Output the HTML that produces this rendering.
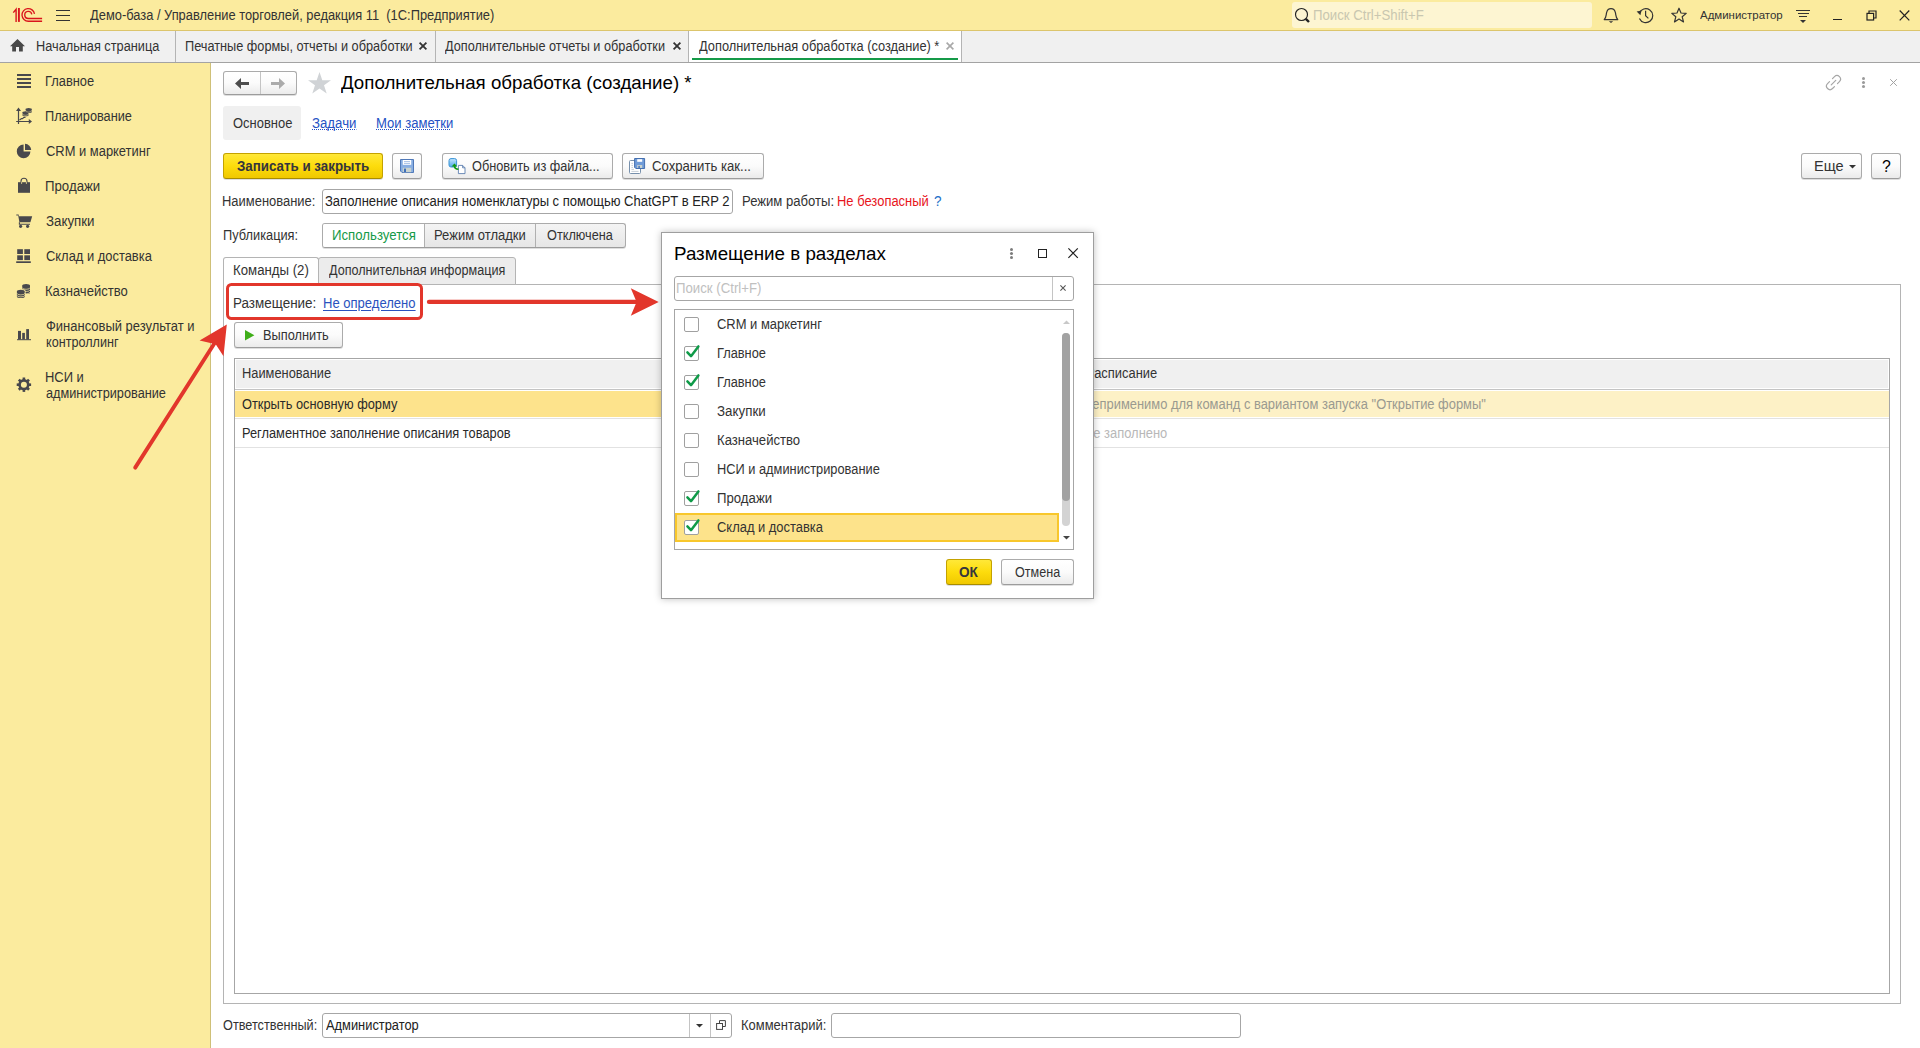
<!DOCTYPE html>
<html lang="ru">
<head>
<meta charset="utf-8">
<title>1C</title>
<style>
*{box-sizing:border-box;margin:0;padding:0}
html,body{width:1920px;height:1048px;overflow:hidden;background:#fff}
body{font-family:"Liberation Sans",sans-serif;font-size:14px;color:#333;position:relative}
.abs{position:absolute}
svg{position:absolute;overflow:visible}
.t{position:absolute;white-space:nowrap;line-height:16px;transform-origin:0 0}
.tabsep{position:absolute;top:31px;width:1px;height:31px;background:#b4b4b4}
.btn{position:absolute;border:1px solid #ababab;border-bottom-color:#9c9c9c;border-radius:3px;background:linear-gradient(#ffffff 0%,#fbfbfb 50%,#ebebeb 100%);box-shadow:0 1px 0 rgba(0,0,0,.13)}
.ybtn{background:linear-gradient(#ffe838 0%,#fddc0c 50%,#f0c800 100%);border-color:#c4a200;border-bottom-color:#a88c00}
.inp{position:absolute;border:1px solid #a6a6a6;border-radius:3px;background:#fff}
.lnk{color:#2a52be;text-decoration:underline;text-underline-offset:1.5px}
.lnkd{color:#2452c4;background:repeating-linear-gradient(90deg,#2452c4 0 1px,transparent 1px 2.1px) 0 14px/100% 1px no-repeat}
.cb{position:absolute;width:15px;height:15px;border:1px solid #a0a0a0;border-radius:2px;background:#fff}
</style>
</head>
<body>
<!-- TITLE BAR -->
<div class="abs" style="left:0;top:0;width:1920px;height:30px;background:#fbeb9e"></div>
<div class="abs" style="left:0;top:30px;width:1920px;height:1px;background:#dcc56c"></div>
<!-- logo -->
<svg style="left:12px;top:7px" width="31" height="16" viewBox="0 0 31 16"><g fill="none" stroke="#d9141c"><path d="M1.3 5.6 L4.1 2.2 V14.9" stroke-width="1.4"/><path d="M6.9 1 V14.9" stroke-width="1.9"/><path d="M30.1 14.2 H16.3 A6.3 6.3 0 1 1 22.5 6.8" stroke-width="1.35"/><path d="M30.1 11.45 H16.3 A3.55 3.55 0 1 1 19.8 7.3" stroke-width="1.35"/></g></svg>
<!-- hamburger -->
<div class="abs" style="left:56px;top:10px;width:14px;height:1.4px;background:#333"></div>
<div class="abs" style="left:56px;top:15px;width:14px;height:1.4px;background:#333"></div>
<div class="abs" style="left:56px;top:20px;width:14px;height:1.4px;background:#333"></div>
<!-- search -->
<div class="abs" style="left:1292px;top:2px;width:300px;height:26px;background:#fdf5d2;border-radius:3px"></div>
<svg style="left:1294px;top:7px" width="17" height="17" viewBox="0 0 17 17"><circle cx="7.5" cy="7.5" r="6" fill="none" stroke="#222" stroke-width="1.15"/><path d="M11.8 11.8 L15 15" stroke="#222" stroke-width="2.4"/></svg>
<!-- bell -->
<svg style="left:1603px;top:7px" width="16" height="17" viewBox="0 0 16 17"><path d="M1.2 12.6 C3.4 10.5 3 8 3.6 5.6 C4.2 3 6 1.7 8 1.7 C10 1.7 11.8 3 12.4 5.6 C13 8 12.6 10.5 14.8 12.6 Z" fill="none" stroke="#333" stroke-width="1.2" stroke-linejoin="round"/><path d="M5.8 14.3 H10.2 L8 16 Z" fill="#333"/></svg>
<!-- history -->
<svg style="left:1636px;top:7px" width="18" height="17" viewBox="0 0 18 17"><path d="M3.2 6.2 A7 7 0 1 1 3.4 11.6" fill="none" stroke="#333" stroke-width="1.2"/><path d="M0.6 4.6 L5.6 3.6 L4.4 8.2 Z" fill="#333"/><path d="M9.6 3.8 V8.8 L12.4 11.4" fill="none" stroke="#333" stroke-width="1.2"/></svg>
<!-- star -->
<svg style="left:1671px;top:7px" width="16" height="16" viewBox="0 0 16 16"><path d="M8 1.2 L10 6 L15.2 6.4 L11.2 9.8 L12.5 14.9 L8 12.1 L3.5 14.9 L4.8 9.8 L0.8 6.4 L6 6 Z" fill="none" stroke="#333" stroke-width="1.2" stroke-linejoin="round"/></svg>
<!-- menu -->
<div class="abs" style="left:1796px;top:10px;width:14px;height:1.2px;background:#333"></div>
<div class="abs" style="left:1797.5px;top:13px;width:11px;height:1.2px;background:#333"></div>
<div class="abs" style="left:1799px;top:16px;width:8px;height:1.2px;background:#333"></div>
<svg style="left:1800px;top:20px" width="6" height="3" viewBox="0 0 6 3"><path d="M0 0 H6 L3 3 Z" fill="#333"/></svg>
<!-- win controls -->
<div class="abs" style="left:1833px;top:19px;width:9px;height:1.3px;background:#222"></div>
<svg style="left:1866px;top:10px" width="11" height="11" viewBox="0 0 11 11"><path d="M3 3 V1 H10 V8 H8" fill="none" stroke="#222" stroke-width="1.2"/><rect x="1" y="3.4" width="6.6" height="6.6" fill="none" stroke="#222" stroke-width="1.2"/></svg>
<svg style="left:1899px;top:10px" width="11" height="11" viewBox="0 0 11 11"><path d="M0.7 0.5 L10.3 10.3 M10.3 0.5 L0.7 10.3" stroke="#222" stroke-width="1.2"/></svg>

<!-- TAB BAR -->
<div class="abs" style="left:0;top:31px;width:1920px;height:31px;background:#f0f0f0"></div>
<div class="abs" style="left:0;top:62px;width:1920px;height:1px;background:#a3a3a3"></div>
<div class="abs" style="left:689px;top:31px;width:272px;height:31px;background:#fff"></div>
<div class="abs" style="left:692px;top:58px;width:266px;height:2px;background:#159a48"></div>
<div class="tabsep" style="left:175px"></div>
<div class="tabsep" style="left:435px"></div>
<div class="tabsep" style="left:688px"></div>
<div class="tabsep" style="left:961px"></div>
<svg style="left:10px;top:39px" width="15" height="13" viewBox="0 0 15 13"><path d="M7.5 0 L15 7.2 H12.8 V12.4 H9 V8 H6 V12.4 H2.2 V7.2 H0 Z" fill="#484848"/></svg>
<svg style="left:419px;top:42px" width="8" height="8" viewBox="0 0 8 8"><path d="M0.6 0.6 L7.4 7.4 M7.4 0.6 L0.6 7.4" stroke="#333" stroke-width="1.8"/></svg>
<svg style="left:672.5px;top:42px" width="8" height="8" viewBox="0 0 8 8"><path d="M0.6 0.6 L7.4 7.4 M7.4 0.6 L0.6 7.4" stroke="#333" stroke-width="1.8"/></svg>
<svg style="left:945.5px;top:42px" width="8" height="8" viewBox="0 0 8 8"><path d="M0.6 0.6 L7.4 7.4 M7.4 0.6 L0.6 7.4" stroke="#a8a8a8" stroke-width="1.6"/></svg>

<!-- SIDEBAR -->
<div class="abs" style="left:0;top:63px;width:210px;height:985px;background:#fbeb9e"></div>
<div class="abs" style="left:210px;top:63px;width:1px;height:985px;background:#cfc078"></div>
<!-- glavnoe -->
<div class="abs" style="left:17px;top:74px;width:14px;height:2px;background:#48484c;box-shadow:0 4px 0 #48484c,0 8px 0 #48484c,0 12px 0 #48484c"></div>
<!-- planning -->
<svg style="left:15px;top:107px" width="18" height="18" viewBox="0 0 18 18"><g fill="none" stroke="#48484c" stroke-width="1.2"><path d="M3.5 17 V2.2 M1.2 14.5 H15"/><path d="M4.5 13 L6.5 11.5 L7.5 11.6 L9 10.3 H10.5"/></g><path d="M3.5 0.6 L6 4 H1 Z M17 14.5 L13.8 12 V17 Z" fill="#48484c"/><g fill="#48484c"><ellipse cx="13.7" cy="2.6" rx="3.2" ry="1.5"/><ellipse cx="13.7" cy="4.6" rx="3.2" ry="1.5"/><ellipse cx="10.5" cy="5.8" rx="3.2" ry="1.5"/><ellipse cx="10.5" cy="7.8" rx="3.2" ry="1.5"/></g><g fill="none" stroke="#fbeb9e" stroke-width="0.5"><path d="M10.5 3.6 A3.2 1.5 0 0 0 16.9 3.6"/><path d="M7.3 6.8 A3.2 1.5 0 0 0 13.7 6.8"/></g></svg>
<!-- crm pie -->
<svg style="left:16px;top:143px" width="16" height="16" viewBox="0 0 16 16"><path d="M7.6 1.6 A6.8 6.8 0 1 0 14.4 8.4 H7.6 Z" fill="#48484c"/><path d="M9 0.8 A6.4 6.4 0 0 1 15.2 7 H9 Z" fill="#48484c"/></svg>
<!-- bag -->
<svg style="left:17px;top:177px" width="14" height="17" viewBox="0 0 14 17"><rect x="1" y="5.2" width="12" height="10.6" fill="#48484c"/><path d="M4 7 V4.2 A3 3 0 0 1 10 4.2 V7" fill="none" stroke="#48484c" stroke-width="1.1"/><path d="M4.6 5.2 V6.8 M9.4 5.2 V6.8" stroke="#fbeb9e" stroke-width="0.9"/></svg>
<!-- cart -->
<svg style="left:16px;top:213px" width="17" height="16" viewBox="0 0 17 16"><path d="M0.3 1.4 H2.6 L3 3.2 H16.2 L14.4 9.2 H3.4 L2.2 2.4 H0.3 Z" fill="#48484c"/><path d="M3.4 9.2 V11.3 H14" fill="none" stroke="#48484c" stroke-width="1.1"/><circle cx="4.6" cy="13.3" r="1.6" fill="#48484c"/><circle cx="11.6" cy="13.3" r="1.6" fill="#48484c"/></svg>
<!-- warehouse -->
<svg style="left:16px;top:249px" width="15" height="15" viewBox="0 0 15 15"><g fill="#48484c"><rect x="1.2" y="0.2" width="5.7" height="4.8"/><rect x="8.3" y="0.2" width="5.7" height="4.8"/><rect x="1.2" y="6.3" width="5.7" height="4.8"/><rect x="8.3" y="6.3" width="5.7" height="4.8"/><rect x="0.2" y="12.3" width="14.6" height="1.7"/></g></svg>
<!-- treasury coins -->
<svg style="left:16px;top:283px" width="16" height="16" viewBox="0 0 16 16"><g fill="#48484c"><path d="M6.2 2.6 A3.9 1.7 0 0 1 14 2.6 V9.4 A3.9 1.7 0 0 1 6.2 9.4 Z"/></g><g fill="none" stroke="#fbeb9e" stroke-width="0.7"><path d="M6.2 4.6 A3.9 1.7 0 0 0 14 4.6"/><path d="M6.2 6.8 A3.9 1.7 0 0 0 14 6.8"/><path d="M6.2 9 A3.9 1.7 0 0 0 14 9"/></g><path d="M0.4 8.2 A4.4 2.2 0 0 1 9.6 8.2 V13.4 A4.4 2.2 0 0 1 0.4 13.4 Z" fill="#fbeb9e"/><path d="M0.9 8.4 A3.9 1.7 0 0 1 8.7 8.4 V13.4 A3.9 1.7 0 0 1 0.9 13.4 Z" fill="#48484c"/><g fill="none" stroke="#fbeb9e" stroke-width="0.7"><path d="M0.9 10.2 A3.9 1.7 0 0 0 8.7 10.2"/><path d="M0.9 12.2 A3.9 1.7 0 0 0 8.7 12.2"/></g></svg>
<!-- finance -->
<svg style="left:17px;top:329px" width="14" height="12" viewBox="0 0 14 12"><g fill="#48484c"><rect x="1" y="1.9" width="3" height="8.6"/><rect x="5.2" y="3.9" width="2.7" height="6.6"/><rect x="9.2" y="0.1" width="2.8" height="10.4"/><rect x="0" y="10.2" width="14" height="1"/></g></svg>
<!-- gear -->
<svg style="left:16px;top:377px" width="16" height="16" viewBox="0 0 16 16"><g transform="translate(7.9 7.7)"><circle r="4.3" fill="none" stroke="#48484c" stroke-width="2.6"/><g fill="#48484c"><rect x="-1.3" y="-7.2" width="2.6" height="3"/><rect x="-1.3" y="4.2" width="2.6" height="3"/><rect x="-7.2" y="-1.3" width="3" height="2.6"/><rect x="4.2" y="-1.3" width="3" height="2.6"/><g transform="rotate(45)"><rect x="-1.3" y="-7.2" width="2.6" height="3"/><rect x="-1.3" y="4.2" width="2.6" height="3"/><rect x="-7.2" y="-1.3" width="3" height="2.6"/><rect x="4.2" y="-1.3" width="3" height="2.6"/></g></g></g></svg>

<!-- nav -->
<div class="btn" style="left:223px;top:71px;width:74px;height:24px"></div>
<div class="abs" style="left:260px;top:72px;width:1px;height:22px;background:#c4c4c4"></div>
<svg style="left:235px;top:78px" width="14" height="11" viewBox="0 0 14 11"><path d="M0 5.5 L6 0 V4.1 H14 V6.9 H6 V11 Z" fill="#4d4d4d"/></svg>
<svg style="left:271px;top:78px" width="14" height="11" viewBox="0 0 14 11"><path d="M14 5.5 L8 0 V4.1 H0 V6.9 H8 V11 Z" fill="#ababab"/></svg>
<svg style="left:308px;top:72px" width="23" height="22" viewBox="0 0 23 22"><path d="M11.5 0 L14.3 8.2 H23 L16 13.3 L18.7 21.6 L11.5 16.5 L4.3 21.6 L7 13.3 L0 8.2 H8.7 Z" fill="#d0d3d6"/></svg>
<!-- right header icons -->
<svg style="left:1825px;top:74px" width="18" height="18" viewBox="0 0 18 18"><g fill="none" stroke="#a6a6a6" stroke-width="1.2" stroke-linecap="round" transform="translate(8.5 8.6) rotate(-45)"><path d="M2.1 -3.5 H4.9 A3.5 3.5 0 0 1 4.9 3.5 H2.1"/><path d="M-2.1 3.5 H-4.9 A3.5 3.5 0 0 1 -4.9 -3.5 H-2.1"/><path d="M-3.2 0 H3.2"/></g></svg>
<div class="abs" style="left:1862px;top:77px;width:3px;height:3px;border-radius:50%;background:#9a9a9a;box-shadow:0 4px 0 #9a9a9a,0 8px 0 #9a9a9a"></div>
<svg style="left:1890px;top:79px" width="7" height="7" viewBox="0 0 7 7"><path d="M0.2 0.2 L6.8 6.8 M6.8 0.2 L0.2 6.8" stroke="#a2a2a2" stroke-width="1"/></svg>
<!-- subtabs -->
<div class="abs" style="left:223px;top:106px;width:78px;height:34px;background:#f0f0f0;border-radius:3px"></div>
<!-- command bar -->
<div class="btn ybtn" style="left:223px;top:153px;width:160px;height:26px"></div>
<div class="btn" style="left:392px;top:153px;width:30px;height:26px"></div>
<svg style="left:400px;top:159px" width="14" height="14" viewBox="0 0 14 14"><path d="M0.5 0.5 H13.5 V13.5 H2 L0.5 12 Z" fill="#88aee2" stroke="#5079b8"/><rect x="2.8" y="1" width="8.4" height="4.8" fill="#fff"/><path d="M4 2.6 H10 M4 4.4 H10" stroke="#8fb0de" stroke-width="0.8"/><rect x="2.8" y="8.8" width="8.4" height="4.4" fill="#c9d2ce"/><rect x="4" y="9.6" width="2" height="3.4" fill="#3f6fb8"/></svg>
<div class="btn" style="left:442px;top:153px;width:171px;height:26px"></div>
<svg style="left:448px;top:158px" width="18" height="17" viewBox="0 0 18 17"><defs><linearGradient id="gb" x1="0" y1="0" x2="0" y2="1"><stop offset="0" stop-color="#c4e6ff"/><stop offset="1" stop-color="#4ea6e6"/></linearGradient></defs><rect x="1" y="0.6" width="7.6" height="8.4" rx="2" fill="url(#gb)" stroke="#3b94d6"/><path d="M10.4 7.4 H14.6 L17 9.8 V15.6 H10.4 Z" fill="#fff" stroke="#5c7fb0" stroke-width="0.9"/><path d="M14.6 7.4 V9.8 H17" fill="none" stroke="#5c7fb0" stroke-width="0.9"/><path d="M10.4 11.2 C7.8 11.2 6.6 10 6.4 8.2" fill="none" stroke="#119911" stroke-width="1.6"/><path d="M3.6 8.4 L6.4 5.4 L9.2 8.4 Z" fill="#119911"/></svg>
<div class="btn" style="left:622px;top:153px;width:142px;height:26px"></div>
<svg style="left:629px;top:157px" width="17" height="18" viewBox="0 0 17 18"><rect x="0.5" y="3.5" width="11" height="13" rx="1" fill="#fff" stroke="#7790ac"/><path d="M2.4 6.4 H4 M2.4 8.4 H4 M2.4 10.4 H4 M2.4 12.4 H5 M2.4 14.4 H9.6" stroke="#b8c2cc" stroke-width="0.8"/><path d="M5.6 1.5 H15.6 V11.5 H6.8 L5.6 10.3 Z" fill="#6f9bd8" stroke="#4570b0"/><rect x="8.2" y="2.2" width="5" height="2.6" fill="#fff"/><rect x="8.2" y="8" width="5" height="3" fill="#c9d2ce"/><rect x="9.4" y="8.8" width="1.4" height="2.2" fill="#3f6fb8"/></svg>
<div class="btn" style="left:1801px;top:153px;width:61px;height:26px"></div>
<svg style="left:1848.5px;top:165px" width="7" height="4" viewBox="0 0 7 4"><path d="M0 0 H7 L3.5 3.6 Z" fill="#333"/></svg>
<div class="btn" style="left:1871px;top:153px;width:30px;height:26px"></div>
<!-- name row -->
<div class="inp" style="left:322px;top:189px;width:411px;height:25px"></div>
<!-- publication -->
<div class="btn" style="left:322px;top:223px;width:304px;height:25px;background:linear-gradient(#f4f4f4,#e6e6e6)"></div>
<div class="abs" style="left:323px;top:224px;width:101px;height:23px;background:#fff;border-radius:2px 0 0 2px"></div>
<div class="abs" style="left:424px;top:224px;width:1px;height:23px;background:#b0b0b0"></div>
<div class="abs" style="left:535px;top:224px;width:1px;height:23px;background:#b0b0b0"></div>
<!-- page tabs -->
<div class="abs" style="left:223px;top:284px;width:1678px;height:720px;border:1px solid #b4b4b4"></div>
<div class="abs" style="left:318px;top:257px;width:198px;height:28px;background:#ececec;border:1px solid #b4b4b4;border-radius:3px 3px 0 0"></div>
<div class="abs" style="left:223px;top:257px;width:96px;height:28px;background:#fff;border:1px solid #b4b4b4;border-bottom:none;border-radius:3px 3px 0 0"></div>
<div class="btn" style="left:234px;top:322px;width:109px;height:26px"></div>
<svg style="left:245px;top:330px" width="10" height="11" viewBox="0 0 10 11"><path d="M0 0 L9.4 5.3 L0 10.6 Z" fill="#3fae19"/></svg>
<!-- table -->
<div class="abs" style="left:234px;top:358px;width:1656px;height:636px;border:1px solid #a6a6a6"></div>
<div class="abs" style="left:236px;top:360px;width:1652px;height:28px;background:#f0f0f0"></div>
<div class="abs" style="left:235px;top:389px;width:1654px;height:1px;background:#c4c4c4"></div>
<div class="abs" style="left:235px;top:391px;width:850px;height:26px;background:#fde38c"></div>
<div class="abs" style="left:1085px;top:391px;width:804px;height:26px;background:#fdf1c6"></div>
<div class="abs" style="left:235px;top:418px;width:1654px;height:1px;background:#e2e2e2"></div>
<div class="abs" style="left:235px;top:447px;width:1654px;height:1px;background:#e2e2e2"></div>
<!-- footer -->
<div class="inp" style="left:322px;top:1013px;width:410px;height:25px"></div>
<div class="abs" style="left:689px;top:1014px;width:1px;height:23px;background:#c4c4c4"></div>
<div class="abs" style="left:710px;top:1014px;width:1px;height:23px;background:#c4c4c4"></div>
<svg style="left:696px;top:1024px" width="7" height="4" viewBox="0 0 7 4"><path d="M0 0 H7 L3.5 3.6 Z" fill="#333"/></svg>
<svg style="left:716px;top:1020px" width="10" height="10" viewBox="0 0 10 10"><path d="M3.5 3.5 V0.6 H9.4 V6.5 H6.5" fill="none" stroke="#444" stroke-width="1"/><rect x="0.6" y="3.5" width="5.9" height="5.9" fill="none" stroke="#444" stroke-width="1"/></svg>
<div class="inp" style="left:831px;top:1013px;width:410px;height:25px"></div>

<div class="t" style="left:89.54px;top:7px;transform:scaleX(0.9194);">Демо-база / Управление торговлей, редакция 11  (1С:Предприятие)</div>
<div class="t" style="left:1313.02px;top:7px;color:#c9c7b0;transform:scaleX(0.9432);">Поиск Ctrl+Shift+F</div>
<div class="t" style="left:1699.73px;top:7px;font-size:11.33px;line-height:16px;transform:scaleX(1.0118);">Администратор</div>
<div class="t" style="left:35.63px;top:38px;transform:scaleX(0.9100);">Начальная страница</div>
<div class="t" style="left:184.89px;top:38px;transform:scaleX(0.9093);">Печатные формы, отчеты и обработки</div>
<div class="t" style="left:445.24px;top:38px;transform:scaleX(0.9070);">Дополнительные отчеты и обработки</div>
<div class="t" style="left:698.95px;top:38px;transform:scaleX(0.9156);">Дополнительная обработка (создание) *</div>
<div class="t" style="left:45.00px;top:73px;transform:scaleX(0.9183);">Главное</div>
<div class="t" style="left:45.05px;top:108px;transform:scaleX(0.9098);">Планирование</div>
<div class="t" style="left:45.79px;top:143px;transform:scaleX(0.9228);">CRM и маркетинг</div>
<div class="t" style="left:45.10px;top:178px;transform:scaleX(0.9443);">Продажи</div>
<div class="t" style="left:45.95px;top:213px;transform:scaleX(0.9494);">Закупки</div>
<div class="t" style="left:45.89px;top:248px;transform:scaleX(0.9219);">Склад и доставка</div>
<div class="t" style="left:45.41px;top:283px;transform:scaleX(0.9317);">Казначейство</div>
<div class="t" style="left:45.89px;top:318px;transform:scaleX(0.9266);">Финансовый результат и</div>
<div class="t" style="left:45.53px;top:334px;transform:scaleX(0.9008);">контроллинг</div>
<div class="t" style="left:45.02px;top:369px;transform:scaleX(0.9250);">НСИ и</div>
<div class="t" style="left:46.08px;top:385px;transform:scaleX(0.9089);">администрирование</div>
<div class="t" style="left:340.78px;top:71px;font-size:18.67px;line-height:24px;color:#000;transform:scaleX(1.0023);">Дополнительная обработка (создание) *</div>
<div class="t" style="left:232.50px;top:115px;transform:scaleX(0.9254);">Основное</div>
<div class="t lnkd" style="left:311.78px;top:115px;transform:scaleX(0.9449);">Задачи</div>
<div class="t lnkd" style="left:376.00px;top:115px;transform:scaleX(0.9344);">Мои заметки</div>
<div class="t" style="left:237.00px;top:158px;font-weight:bold;color:#35353d;transform:scaleX(0.9523);">Записать и закрыть</div>
<div class="t" style="left:471.54px;top:158px;transform:scaleX(0.9107);">Обновить из файла...</div>
<div class="t" style="left:651.53px;top:158px;transform:scaleX(0.9381);">Сохранить как...</div>
<div class="t" style="left:1813.73px;top:158px;transform:scaleX(1.0370);">Еще</div>
<div class="t" style="left:1881.68px;top:159px;font-size:16px;line-height:16px;color:#000;transform:scaleX(0.9898);">?</div>
<div class="t" style="left:221.96px;top:193px;transform:scaleX(0.9246);">Наименование:</div>
<div class="t" style="left:324.94px;top:193px;color:#222;transform:scaleX(0.9292);">Заполнение описания номенклатуры с помощью ChatGPT в ERP 2</div>
<div class="t" style="left:741.89px;top:193px;transform:scaleX(0.9354);">Режим работы:</div>
<div class="t" style="left:836.92px;top:193px;color:#e8141c;transform:scaleX(0.9258);">Не безопасный</div>
<div class="t" style="left:934.03px;top:193px;color:#1c6ec8;transform:scaleX(0.9674);">?</div>
<div class="t" style="left:223.12px;top:227px;transform:scaleX(0.9145);">Публикация:</div>
<div class="t" style="left:332.09px;top:227px;color:#159a48;transform:scaleX(0.9433);">Используется</div>
<div class="t" style="left:433.58px;top:227px;transform:scaleX(0.9298);">Режим отладки</div>
<div class="t" style="left:546.59px;top:227px;transform:scaleX(0.9075);">Отключена</div>
<div class="t" style="left:233.10px;top:262px;transform:scaleX(0.9447);">Команды (2)</div>
<div class="t" style="left:328.89px;top:262px;transform:scaleX(0.9006);">Дополнительная информация</div>
<div class="t" style="left:232.96px;top:295px;transform:scaleX(0.9609);">Размещение:</div>
<div class="t lnk" style="left:322.84px;top:295px;transform:scaleX(0.9315);">Не определено</div>
<div class="t" style="left:262.98px;top:327px;transform:scaleX(0.9137);">Выполнить</div>
<div class="t" style="left:241.90px;top:365px;transform:scaleX(0.9178);">Наименование</div>
<div class="t" style="left:1085.96px;top:365px;transform:scaleX(0.9225);">Расписание</div>
<div class="t" style="left:242.35px;top:396px;color:#2a2a2a;transform:scaleX(0.9158);">Открыть основную форму</div>
<div class="t" style="left:1082.98px;top:396px;color:#9a9a90;transform:scaleX(0.9225);">Неприменимо для команд с вариантом запуска &quot;Открытие формы&quot;</div>
<div class="t" style="left:241.99px;top:425px;color:#2a2a2a;transform:scaleX(0.9157);">Регламентное заполнение описания товаров</div>
<div class="t" style="left:1083.95px;top:425px;color:#b8b8b8;transform:scaleX(0.9225);">Не заполнено</div>
<div class="t" style="left:222.70px;top:1017px;transform:scaleX(0.9071);">Ответственный:</div>
<div class="t" style="left:325.63px;top:1017px;color:#222;transform:scaleX(0.9185);">Администратор</div>
<div class="t" style="left:740.96px;top:1017px;transform:scaleX(0.9266);">Комментарий:</div>


<div class="abs" style="left:661px;top:232px;width:433px;height:367px;background:#fff;border:1px solid #9e9e9e;box-shadow:0 0 7px rgba(0,0,0,.25)"></div>
<div class="abs" style="left:1010px;top:248px;width:3px;height:3px;border-radius:50%;background:#7c7c7c;box-shadow:0 4px 0 #7c7c7c,0 8px 0 #7c7c7c"></div>
<div class="abs" style="left:1038px;top:249px;width:9px;height:9px;border:1.2px solid #222"></div>
<svg style="left:1068px;top:248px" width="10" height="10" viewBox="0 0 10 10"><path d="M0.4 0.4 L9.8 9.8 M9.8 0.4 L0.4 9.8" stroke="#222" stroke-width="1.2"/></svg>
<div class="inp" style="left:674px;top:276px;width:400px;height:25px"></div>
<div class="abs" style="left:1052px;top:277px;width:1px;height:23px;background:#c4c4c4"></div>
<svg style="left:1059.5px;top:285px" width="6" height="6" viewBox="0 0 6 6"><path d="M0.4 0.4 L5.6 5.6 M5.6 0.4 L0.4 5.6" stroke="#555" stroke-width="1.1"/></svg>
<div class="abs" style="left:674px;top:309px;width:400px;height:241px;border:1px solid #a6a6a6"></div>
<div class="abs" style="left:675px;top:513px;width:384px;height:29px;background:#fde38b;border:2px solid #f8c72c"></div>
<!-- scrollbar -->
<svg style="left:1062.5px;top:319.5px" width="7" height="4" viewBox="0 0 7 4"><path d="M0 4 H7 L3.5 0.4 Z" fill="#c8c8c8"/></svg>
<div class="abs" style="left:1062px;top:333px;width:8px;height:193px;background:#d3d3d3;border-radius:4px"></div>
<div class="abs" style="left:1062px;top:333px;width:8px;height:168px;background:#a2a2a2;border-radius:4px"></div>
<svg style="left:1062.5px;top:536px" width="7" height="4" viewBox="0 0 7 4"><path d="M0 0 H7 L3.5 3.6 Z" fill="#444"/></svg>
<!-- checkboxes -->
<div class="cb" style="left:684px;top:317px"></div>
<div class="cb" style="left:684px;top:346px"></div>
<div class="cb" style="left:684px;top:375px"></div>
<div class="cb" style="left:684px;top:404px"></div>
<div class="cb" style="left:684px;top:433px"></div>
<div class="cb" style="left:684px;top:462px"></div>
<div class="cb" style="left:684px;top:491px"></div>
<div class="cb" style="left:684px;top:520px"></div>
<svg style="left:686px;top:345px" width="14" height="14" viewBox="0 0 14 14"><path d="M1.4 7.4 L5 11.2 L12.4 1.4" fill="none" stroke="#0f9a48" stroke-width="2.5" stroke-linecap="round" stroke-linejoin="round"/></svg>
<svg style="left:686px;top:374px" width="14" height="14" viewBox="0 0 14 14"><path d="M1.4 7.4 L5 11.2 L12.4 1.4" fill="none" stroke="#0f9a48" stroke-width="2.5" stroke-linecap="round" stroke-linejoin="round"/></svg>
<svg style="left:686px;top:490px" width="14" height="14" viewBox="0 0 14 14"><path d="M1.4 7.4 L5 11.2 L12.4 1.4" fill="none" stroke="#0f9a48" stroke-width="2.5" stroke-linecap="round" stroke-linejoin="round"/></svg>
<svg style="left:686px;top:519px" width="14" height="14" viewBox="0 0 14 14"><path d="M1.4 7.4 L5 11.2 L12.4 1.4" fill="none" stroke="#0f9a48" stroke-width="2.5" stroke-linecap="round" stroke-linejoin="round"/></svg>
<div class="btn ybtn" style="left:946px;top:559px;width:46px;height:26px"></div>
<div class="btn" style="left:1001px;top:559px;width:73px;height:26px"></div>

<div class="t" style="left:673.95px;top:242px;font-size:18.67px;line-height:24px;color:#000;transform:scaleX(1.0061);">Размещение в разделах</div>
<div class="t" style="left:676.31px;top:280px;color:#c0c0c0;transform:scaleX(0.9439);">Поиск (Ctrl+F)</div>
<div class="t" style="left:716.62px;top:316px;transform:scaleX(0.9254);">CRM и маркетинг</div>
<div class="t" style="left:716.83px;top:345px;transform:scaleX(0.9145);">Главное</div>
<div class="t" style="left:716.83px;top:374px;transform:scaleX(0.9145);">Главное</div>
<div class="t" style="left:716.75px;top:403px;transform:scaleX(0.9534);">Закупки</div>
<div class="t" style="left:716.90px;top:432px;transform:scaleX(0.9363);">Казначейство</div>
<div class="t" style="left:716.76px;top:461px;transform:scaleX(0.9153);">НСИ и администрирование</div>
<div class="t" style="left:716.83px;top:490px;transform:scaleX(0.9425);">Продажи</div>
<div class="t" style="left:716.78px;top:519px;transform:scaleX(0.9236);">Склад и доставка</div>
<div class="t" style="left:959.48px;top:564px;font-weight:bold;color:#35353d;transform:scaleX(0.9705);">ОК</div>
<div class="t" style="left:1015.16px;top:564px;transform:scaleX(0.8985);">Отмена</div>
<div class="abs" style="left:226px;top:283px;width:197px;height:37px;border:3px solid #e2362b;border-radius:5.5px"></div>
<svg style="left:0;top:0" width="1920" height="1048" viewBox="0 0 1920 1048"><path d="M429 301.9 H636" stroke="#e2362b" stroke-width="4.3" stroke-linecap="round" fill="none"/><path d="M658.7 301.9 L630.8 288.2 L636.6 301.9 L630.8 315.8 Z" fill="#e2362b"/><path d="M135.2 467.6 L214 344" stroke="#e2362b" stroke-width="3.9" stroke-linecap="round" fill="none"/><path d="M226.8 324.6 L199.6 340.6 L211.4 343.2 L216.2 344.9 L223.5 356.2 Z" fill="#e2362b"/></svg>
</body>
</html>
